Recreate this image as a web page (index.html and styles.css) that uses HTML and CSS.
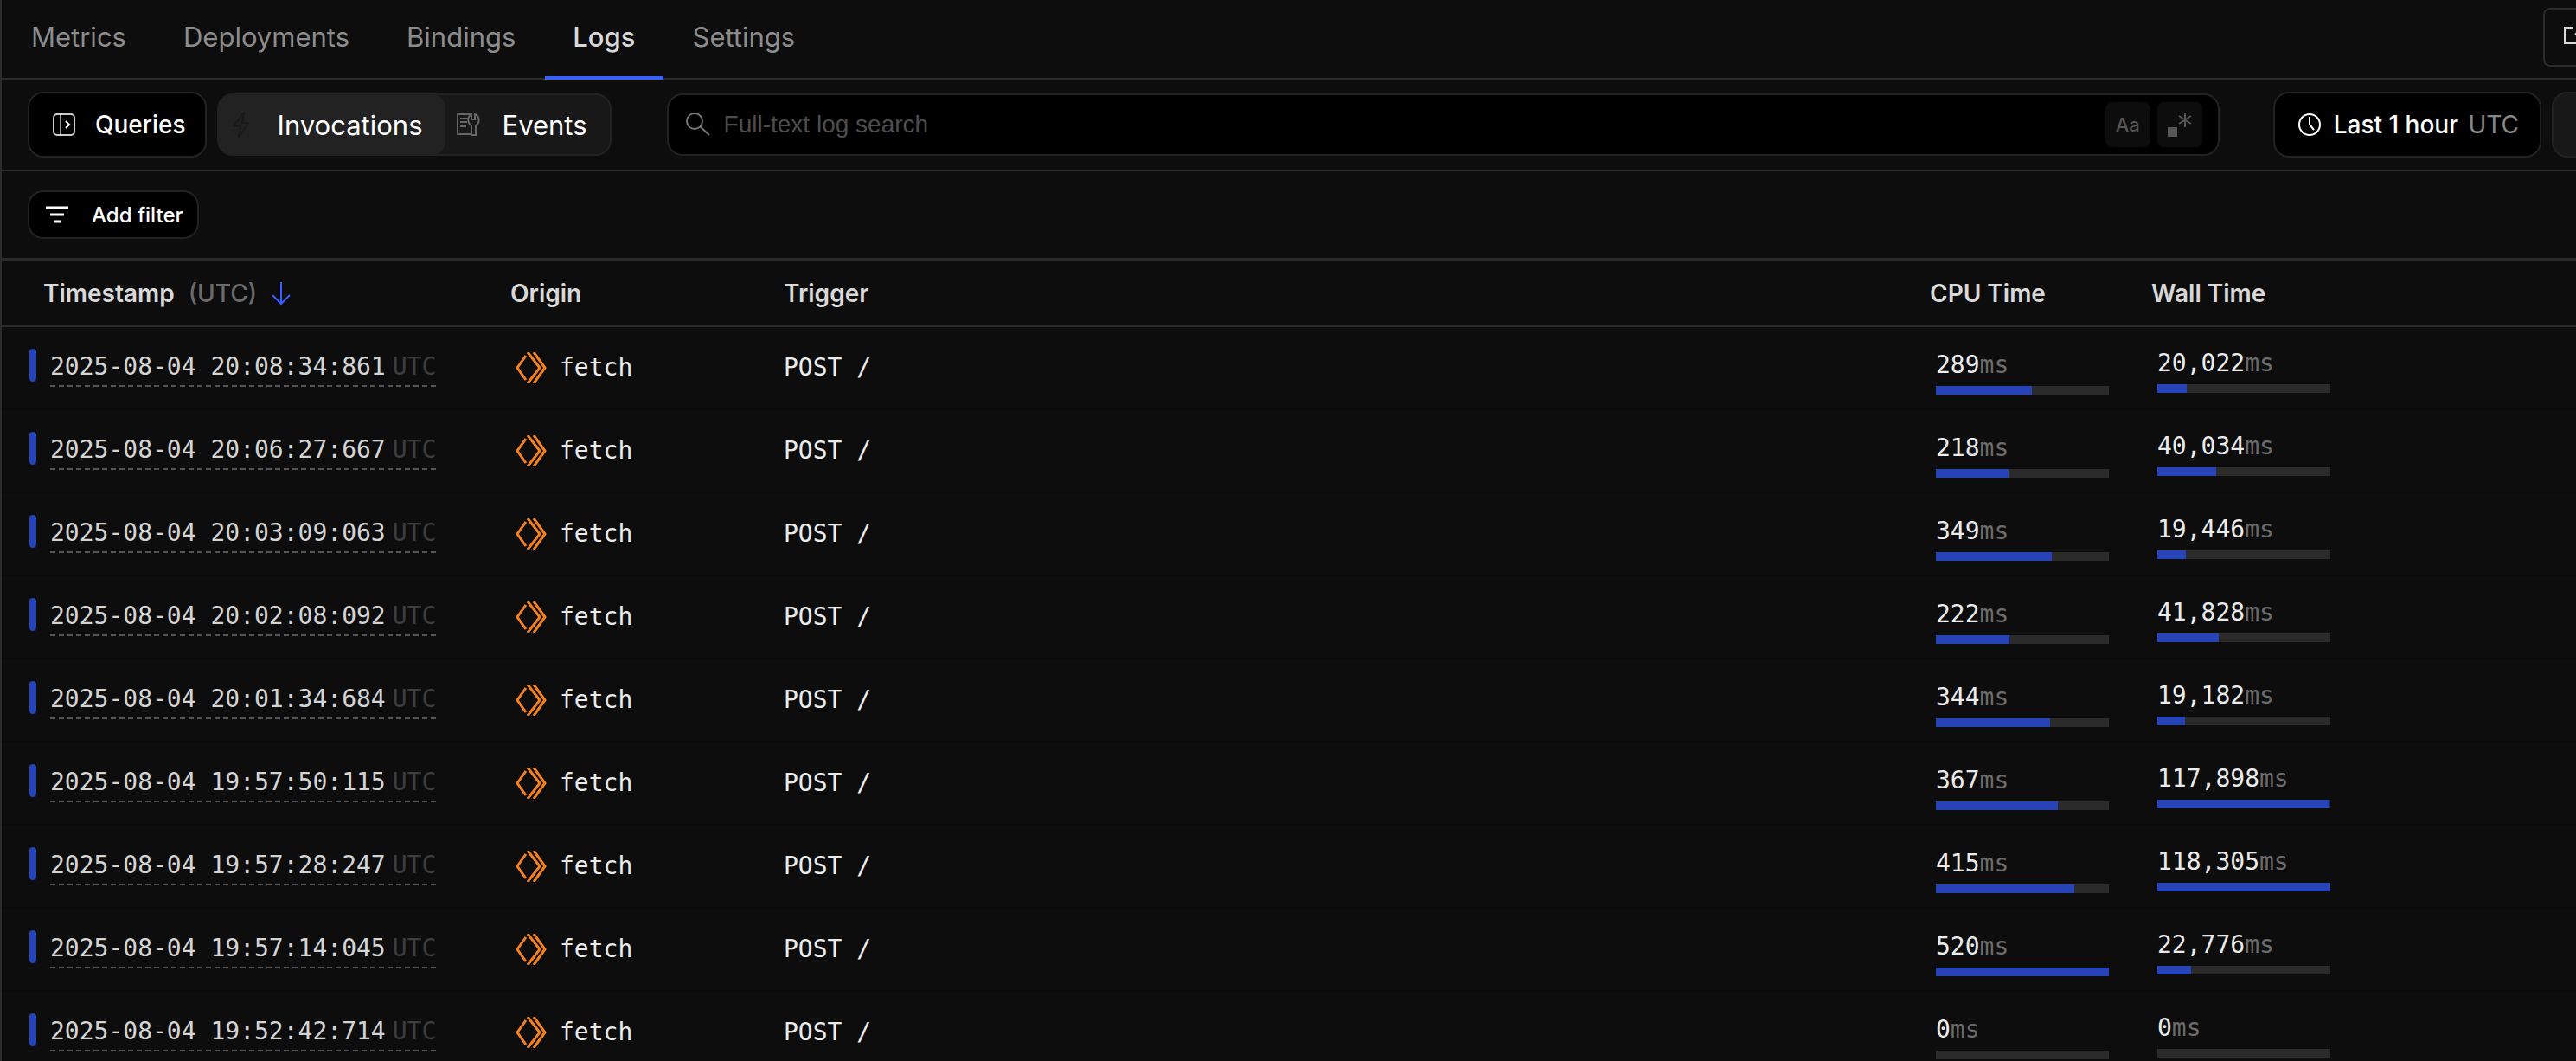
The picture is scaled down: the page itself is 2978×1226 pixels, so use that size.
FILE: index.html
```html
<!DOCTYPE html>
<html lang="en">
<head>
    <meta charset="UTF-8">
    <meta name="viewport" content="width=device-width, initial-scale=1.0">
    <title>Worker Logs</title>
    <link rel="stylesheet" href="styles.css">
</head>
<body>
    <svg class="sprite" aria-hidden="true">
        <symbol id="icon-worker" viewBox="0 0 36 36">
            <path d="M12 4 L2 18 L12 32 M14 0 L28 18 L14 36 M21 0 L34 18 L21 36" fill="none" stroke="currentColor" stroke-width="3"/>
        </symbol>
    </svg>

    <div class="page">
        <header class="top-bar">
            <nav class="tabs">
                <a href="#metrics">Metrics</a>
                <a href="#deployments">Deployments</a>
                <a href="#bindings">Bindings</a>
                <a href="#logs" class="active">Logs</a>
                <a href="#settings">Settings</a>
            </nav>
            <button class="visit-button" aria-label="Visit">
                <svg width="24" height="24" viewBox="0 0 24 24" fill="none" stroke="currentColor" stroke-width="2">
                    <path d="M11 3H1V21H21V13M13 11L22 2M15 2H22V9"/>
                </svg>
            </button>
        </header>

        <div class="toolbar">
            <button class="button queries-button">
                <svg width="28" height="28" viewBox="0 0 28 28" fill="none" stroke="currentColor" stroke-width="2">
                    <rect x="2" y="2" width="24" height="24" rx="4" opacity="0.8"/>
                    <path d="M10 2V26" opacity="0.6"/>
                    <path d="M16 10L20 14L16 18"/>
                </svg>
                Queries
            </button>

            <div class="segmented">
                <button class="segment selected">
                    <svg class="bolt" width="28" height="32" viewBox="0 0 28 32" fill="none" stroke="currentColor" stroke-width="2" stroke-linejoin="round">
                        <path d="M17 2L5 18H13L11 30L22 14H15Z"/>
                    </svg>
                    Invocations
                </button>
                <button class="segment">
                    <svg class="events-icon" width="28" height="28" viewBox="0 0 28 28" fill="none" stroke="currentColor" stroke-width="2">
                        <path d="M17 2H2V25H18M5 7H14M5 11H13M5 16H12"/>
                        <path d="M18 26V15C13 12 13 5 18 2V8H22V2C28 5 28 12 23 15V26Z"/>
                    </svg>
                    Events
                </button>
            </div>

            <div class="search">
                <svg width="28" height="28" viewBox="0 0 28 28" fill="none" stroke="currentColor" stroke-width="2">
                    <circle cx="10" cy="10" r="9"/>
                    <path d="M16 16L27 26"/>
                </svg>
                <input type="text" placeholder="Full-text log search" aria-label="Full-text log search">
                <button class="search-option" aria-label="Match case">Aa</button>
                <button class="search-option" aria-label="Use regular expression">
                    <svg width="28" height="28" viewBox="0 0 28 28">
                        <rect x="0" y="17" width="11" height="11" fill="currentColor"/>
                        <path d="M20 0V17M13 4L27 13M27 4L13 13" stroke="currentColor" stroke-width="2"/>
                    </svg>
                </button>
            </div>

            <button class="button time-range">
                <svg width="28" height="28" viewBox="0 0 28 28" fill="none" stroke="currentColor" stroke-width="2">
                    <circle cx="14" cy="14" r="12"/>
                    <path d="M14 5V14L19 20"/>
                </svg>
                <span>Last 1 hour <span class="zone">UTC</span></span>
            </button>
            <button class="button more-button" aria-label="More"></button>
        </div>

        <div class="filter-bar">
            <button class="button filter-button">
                <svg width="28" height="20" viewBox="0 0 28 20" stroke="currentColor" stroke-width="3">
                    <path d="M1 2H27M6 10H22M10 18H18"/>
                </svg>
                Add filter
            </button>
        </div>

        <table class="logs">
            <colgroup>
                <col class="col-timestamp">
                <col class="col-origin">
                <col>
                <col class="col-cpu">
                <col class="col-wall">
            </colgroup>
            <thead>
                <tr>
                    <th>
                        <div class="sort-header">
                            Timestamp <span class="zone">(UTC)</span>
                            <svg width="24" height="28" viewBox="0 0 24 28" fill="none" stroke="currentColor" stroke-width="2">
                                <path d="M12 1V26M2 16L12 26L22 16"/>
                            </svg>
                        </div>
                    </th>
                    <th>Origin</th>
                    <th>Trigger</th>
                    <th>CPU Time</th>
                    <th>Wall Time</th>
                </tr>
            </thead>
            <tbody id="log-rows"></tbody>
        </table>
    </div>

    <script>
        const logs = [
            { time: '2025-08-04 20:08:34:861', cpu: 289, wall: 20022 },
            { time: '2025-08-04 20:06:27:667', cpu: 218, wall: 40034 },
            { time: '2025-08-04 20:03:09:063', cpu: 349, wall: 19446 },
            { time: '2025-08-04 20:02:08:092', cpu: 222, wall: 41828 },
            { time: '2025-08-04 20:01:34:684', cpu: 344, wall: 19182 },
            { time: '2025-08-04 19:57:50:115', cpu: 367, wall: 117898 },
            { time: '2025-08-04 19:57:28:247', cpu: 415, wall: 118305 },
            { time: '2025-08-04 19:57:14:045', cpu: 520, wall: 22776 },
            { time: '2025-08-04 19:52:42:714', cpu: 0, wall: 0 }
        ];

        const maxCpu = Math.max(...logs.map(log => log.cpu));
        const maxWall = Math.max(...logs.map(log => log.wall));

        function duration(value, max) {
            return `
                <div class="duration">${value.toLocaleString('en-US')}<span class="unit">ms</span></div>
                <div class="meter"><div class="meter-fill" style="width: ${value / max * 100}%"></div></div>`;
        }

        document.getElementById('log-rows').innerHTML = logs.map(log => `
            <tr>
                <td>
                    <div class="timestamp">
                        <span class="level"></span>
                        <span class="time">${log.time}<span class="time-zone">UTC</span></span>
                    </div>
                </td>
                <td>
                    <div class="origin">
                        <svg width="36" height="36"><use href="#icon-worker"/></svg>
                        fetch
                    </div>
                </td>
                <td>POST /</td>
                <td class="cpu">${duration(log.cpu, maxCpu)}</td>
                <td class="wall">${duration(log.wall, maxWall)}</td>
            </tr>`).join('');
    </script>
</body>
</html>
```
FILE: styles.css
```css
* {
    margin: 0;
    padding: 0;
    box-sizing: border-box;
}

body {
    height: 100vh;
    overflow: hidden;
    background: #0d0d0d;
    color: #d9d9d9;
    font-family: Inter, "Liberation Sans", sans-serif;
    font-size: 28px;
}

button {
    border: none;
    background: none;
    color: #fff;
    font-family: inherit;
    font-size: 28px;
    cursor: pointer;
}

svg {
    flex-shrink: 0;
}

.sprite {
    display: none;
}

.page {
    min-height: 100vh;
    border-left: 2px solid #2b2b2b;
}

/* Tabs */
.top-bar {
    display: flex;
    justify-content: space-between;
    height: 92px;
    border-bottom: 2px solid #2b2b2b;
}

.tabs {
    display: flex;
    gap: 2px;
    margin-left: 2px;
}

.tabs a {
    height: 92px;
    padding: 0 32px;
    border-bottom: 4px solid transparent;
    color: #8c8c8c;
    font-size: 31px;
    line-height: 86px;
    text-decoration: none;
}

.tabs a.active {
    border-color: #3860ff;
    color: #d9d9d9;
    font-weight: 500;
}

.visit-button {
    width: 80px;
    height: 68px;
    margin: 9px -42px 0 0;
    padding-left: 22px;
    border: 2px solid #2b2b2b;
    border-radius: 8px;
    color: #d9d9d9;
    text-align: left;
}

/* Toolbar */
.toolbar {
    display: flex;
    align-items: center;
    height: 106px;
    padding-left: 30px;
    border-bottom: 2px solid #2b2b2b;
}

.button {
    display: flex;
    align-items: center;
    height: 76px;
    padding: 0 24px 0 26px;
    border: 2px solid #222;
    border-radius: 18px;
    background: #000;
    font-weight: 500;
    white-space: nowrap;
}

.queries-button {
    gap: 22px;
    padding-right: 22px;
}

.segmented {
    display: flex;
    height: 72px;
    margin: 0 64px 0 12px;
    border: 2px solid #222;
    border-radius: 18px;
    background: #181818;
}

.segment {
    display: flex;
    align-items: center;
    padding: 0 26px 0 12px;
    border-radius: 14px;
    font-size: 31px;
}

.segment.selected {
    background: #222;
}

.bolt {
    margin-right: 28px;
    color: #191919;
}

.events-icon {
    margin-right: 26px;
    color: #666;
}

.search {
    display: flex;
    flex: 1;
    align-items: center;
    height: 72px;
    padding: 0 18px 0 20px;
    border: 2px solid #222;
    border-radius: 18px;
    background: #000;
    color: #777;
}

.search input {
    flex: 1;
    min-width: 0;
    margin-left: 16px;
    border: none;
    outline: none;
    background: none;
    color: #d9d9d9;
    font-family: "Liberation Sans", Arial, sans-serif;
    font-size: 28px;
}

.search input::placeholder {
    color: #4d4d4d;
}

.search-option {
    display: flex;
    align-items: center;
    justify-content: center;
    width: 52px;
    height: 52px;
    margin-left: 8px;
    border-radius: 8px;
    background: #0d0d0d;
    color: #555;
    font-size: 22px;
    font-weight: 500;
}

.time-range {
    margin: 0 12px 0 62px;
}

.time-range > span {
    margin-left: 14px;
}

.zone {
    color: #6b6b6b;
    font-weight: 500;
}

.time-range .zone {
    margin-left: 4px;
    color: #888;
    font-weight: 400;
}

.more-button {
    width: 76px;
    margin-right: -48px;
    background: #181818;
}

/* Filters */
.filter-bar {
    display: flex;
    align-items: center;
    height: 104px;
    padding-left: 30px;
    border-bottom: 4px solid #2b2b2b;
}

.filter-button {
    gap: 26px;
    height: 56px;
    padding: 0 16px 0 18px;
    font-size: 24px;
}

/* Log table */
.logs {
    width: 100%;
    border-collapse: separate;
    border-spacing: 0;
    table-layout: fixed;
}

.col-timestamp {
    width: 573px;
}

.col-origin {
    width: 316px;
}

.col-cpu {
    width: 256px;
}

.col-wall {
    width: 506px;
}

.logs th {
    height: 76px;
    padding-left: 15px;
    border-bottom: 2px solid #2b2b2b;
    font-weight: 600;
    text-align: left;
}

.logs th:first-child {
    padding-left: 48px;
}

.sort-header {
    display: flex;
    align-items: center;
    gap: 16px;
}

.sort-header svg {
    color: #3860ff;
}

.logs td {
    height: 96px;
    padding-left: 15px;
    border-bottom: 2px solid #0a0a0a;
    color: #ebebeb;
    font-family: "DejaVu Sans Mono", "Liberation Mono", monospace;
    font-size: 28px;
    line-height: 38px;
}

.logs td:first-child {
    padding-left: 32px;
}

.timestamp {
    display: flex;
    align-items: flex-start;
    gap: 16px;
}

.level {
    width: 8px;
    height: 38px;
    border-radius: 4px;
    background: #2643b8;
}

.time {
    border-bottom: 2px dashed #555;
    color: #d4d4d4;
    line-height: 42px;
}

.time-zone {
    margin-left: 8px;
    color: #3d3d3d;
}

.origin {
    display: flex;
    align-items: center;
    gap: 15px;
    padding-left: 6px;
}

.origin svg {
    color: #f6821f;
}

.logs td.cpu,
.logs td.wall {
    padding: 9px 0 0 22px;
}

.logs td.wall {
    padding-top: 5px;
}

.unit {
    color: #6b6b6b;
}

.meter {
    width: 200px;
    height: 10px;
    margin-top: 5px;
    background: #2b2b2b;
}

.meter-fill {
    height: 100%;
    background: #2643b8;
}
```
